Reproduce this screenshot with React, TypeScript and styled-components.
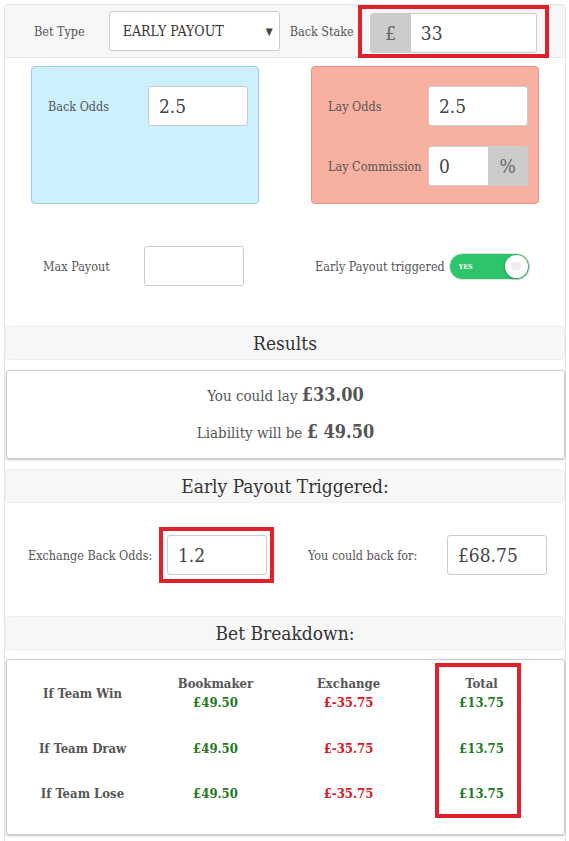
import React from "react";
import styled, { createGlobalStyle } from "styled-components";

const Global = createGlobalStyle`
  html, body { margin: 0; padding: 0; background: #fff; }
  body {
    font-family: "DejaVu Serif", "Liberation Serif", serif;
    font-stretch: condensed;
    color: #555;
  }
  * { box-sizing: border-box; }
`;

const Page = styled.div`
  margin: 4px 3px 0 4px;
  border: 1px solid #e4e4e4;
  border-radius: 4px;
  min-height: 845px;
`;

const TopBar = styled.div`
  display: flex;
  align-items: center;
  height: 53px;
  background: #f7f7f7;
  border-bottom: 1px solid #e9e9e9;
  border-radius: 4px 4px 0 0;
  padding-left: 29px;
`;

const Label = styled.span<{ $w?: number }>`
  font-size: 12.5px;
  color: #555;
  white-space: nowrap;
  ${(p) => (p.$w ? `width: ${p.$w}px; flex: none;` : "")}
`;

const Select = styled.div`
  display: flex;
  align-items: center;
  justify-content: space-between;
  width: 171px;
  height: 40px;
  margin: 0 10px 0 24px;
  padding: 0 6px 0 13px;
  background: #fff;
  border: 1px solid #ccc;
  border-radius: 3px;
  font-size: 14px;
  color: #333;
  span { font-size: 10px; color: #444; }
`;

const Highlight = styled.div<{ $pad?: string; $margin?: string }>`
  border: 4px solid #e2202b;
  padding: ${(p) => p.$pad || "4px"};
  margin: ${(p) => p.$margin || "0"};
`;

const InputGroup = styled.div<{ $w: number }>`
  display: flex;
  width: ${(p) => p.$w}px;
  height: 40px;
  border: 1px solid #ccc;
  border-radius: 3px;
  overflow: hidden;
  background: #fff;
`;

const Addon = styled.div<{ $w: number }>`
  display: flex;
  align-items: center;
  justify-content: center;
  width: ${(p) => p.$w}px;
  flex: none;
  background: #ccc;
  color: #666;
  font-size: 19px;
`;

const Field = styled.div`
  flex: 1;
  display: flex;
  align-items: center;
  padding-left: 10px;
  font-size: 19px;
  color: #444;
`;

const Input = styled.div<{ $w?: number; $h?: number }>`
  display: flex;
  align-items: center;
  width: ${(p) => p.$w || 100}px;
  height: ${(p) => p.$h || 40}px;
  padding-left: 10px;
  background: #fff;
  border: 1px solid #ccc;
  border-radius: 3px;
  font-size: 19px;
  color: #444;
  flex: none;
`;

const CardGrid = styled.div`
  display: grid;
  grid-template-columns: 228px 228px;
  column-gap: 52px;
  padding: 8px 0 0 26px;
`;

const Card = styled.div<{ $tone: "back" | "lay" }>`
  height: 138px;
  border-radius: 4px;
  border: 1px solid ${(p) => (p.$tone === "back" ? "#9ccbe6" : "#ee8f86")};
  background: ${(p) => (p.$tone === "back" ? "#cdf0fd" : "#f8b1a0")};
  padding: 19px 10px 0 16px;
  display: flex;
  flex-direction: column;
  gap: 20px;
`;

const CardRow = styled.div`
  display: grid;
  grid-template-columns: 100px 100px;
  align-items: center;
`;

const OptionsRow = styled.div`
  display: flex;
  align-items: center;
  padding: 42px 0 40px 38px;
`;

const ToggleTrack = styled.div`
  position: relative;
  display: flex;
  align-items: center;
  width: 81px;
  height: 27px;
  margin-left: 4px;
  padding-left: 9px;
  border-radius: 14px;
  background: #2dc46c;
  border: 1px solid #e2e2e2;
  color: #fff;
  font-size: 7px;
  font-weight: bold;
`;

const ToggleKnob = styled.div`
  position: absolute;
  right: 1px;
  top: 1px;
  width: 23px;
  height: 23px;
  border-radius: 50%;
  background: #fff;
  box-shadow: 0 1px 3px rgba(0, 0, 0, 0.3);
  &::after {
    content: "";
    position: absolute;
    left: 6px;
    top: 7px;
    width: 10px;
    height: 8px;
    border-radius: 3px;
    background: #eee;
  }
`;

const SectionHeader = styled.div`
  height: 34px;
  display: flex;
  align-items: center;
  justify-content: center;
  background: #f7f7f7;
  border: 1px solid #eee;
  border-radius: 4px;
  font-size: 19px;
  color: #333;
`;

const ResultBox = styled.div`
  margin: 10px 0 10px 1px;
  height: 89px;
  border: 1px solid #ccc;
  border-radius: 3px;
  box-shadow: 0 1px 2px rgba(0, 0, 0, 0.25);
  display: flex;
  flex-direction: column;
  align-items: center;
  justify-content: center;
  gap: 16px;
  padding-bottom: 3px;
  font-size: 15px;
  color: #555;
  b { font-size: 18px; color: #555; }
`;

const ExchangeRow = styled.div`
  display: flex;
  align-items: center;
  padding: 24px 0 33px 23px;
`;

const Breakdown = styled.div`
  margin: 9px 0 0 1px;
  border: 1px solid #ccc;
  border-radius: 3px;
  box-shadow: 0 1px 2px rgba(0, 0, 0, 0.25);
  display: grid;
  grid-template-columns: repeat(4, 133px);
  grid-template-rows: 38px 18px 18px;
  row-gap: 27px;
  padding: 14px 0 32px 9px;
`;

const Cell = styled.div<{ $col: number; $row: number }>`
  grid-column: ${(p) => p.$col};
  grid-row: ${(p) => p.$row};
  display: flex;
  flex-direction: column;
  align-items: center;
  justify-content: center;
  font-size: 13px;
  font-weight: bold;
  line-height: 19px;
  color: #555;
  text-align: center;
`;

const Money = styled.span<{ $neg?: boolean }>`
  color: ${(p) => (p.$neg ? "#e0141e" : "#1d7a1d")};
`;

const ColumnHighlight = styled.div`
  grid-column: 4;
  grid-row: 1 / span 3;
  justify-self: start;
  width: 86px;
  margin: -11px 0 -16px 20px;
  border: 4px solid #e2202b;
`;

const rows = [
  { label: "If Team Win", head: true },
  { label: "If Team Draw", head: false },
  { label: "If Team Lose", head: false },
];

export default function App() {
  return (
    <>
      <Global />
      <Page>
        <TopBar>
          <Label>Bet Type</Label>
          <Select>
            EARLY PAYOUT <span>▼</span>
          </Select>
          <Label>Back Stake</Label>
          <Highlight $pad="4px 8px 1px 8px" $margin="0 0 0 4px">
            <InputGroup $w={167}>
              <Addon $w={40}>£</Addon>
              <Field>33</Field>
            </InputGroup>
          </Highlight>
        </TopBar>

        <CardGrid>
          <Card $tone="back">
            <CardRow>
              <Label>Back Odds</Label>
              <Input>2.5</Input>
            </CardRow>
          </Card>
          <Card $tone="lay">
            <CardRow>
              <Label>Lay Odds</Label>
              <Input>2.5</Input>
            </CardRow>
            <CardRow>
              <Label>Lay Commission</Label>
              <InputGroup $w={100}>
                <Field>0</Field>
                <Addon $w={39}>%</Addon>
              </InputGroup>
            </CardRow>
          </Card>
        </CardGrid>

        <OptionsRow>
          <Label $w={101}>Max Payout</Label>
          <Input />
          <Label style={{ marginLeft: 71 }}>Early Payout triggered</Label>
          <ToggleTrack>
            YES
            <ToggleKnob />
          </ToggleTrack>
        </OptionsRow>

        <SectionHeader>Results</SectionHeader>
        <ResultBox>
          <div>
            You could lay <b>£33.00</b>
          </div>
          <div>
            Liability will be <b>£ 49.50</b>
          </div>
        </ResultBox>

        <SectionHeader>Early Payout Triggered:</SectionHeader>
        <ExchangeRow>
          <Label $w={131}>Exchange Back Odds:</Label>
          <Highlight $pad="4px 3px 4px 4px">
            <Input>1.2</Input>
          </Highlight>
          <Label $w={139} style={{ marginLeft: 34 }}>
            You could back for:
          </Label>
          <Input>£68.75</Input>
        </ExchangeRow>

        <SectionHeader>Bet Breakdown:</SectionHeader>
        <Breakdown>
          {rows.map((r, i) => (
            <React.Fragment key={r.label}>
              <Cell $col={1} $row={i + 1}>{r.label}</Cell>
              <Cell $col={2} $row={i + 1}>
                {r.head && <span>Bookmaker</span>}
                <Money>£49.50</Money>
              </Cell>
              <Cell $col={3} $row={i + 1}>
                {r.head && <span>Exchange</span>}
                <Money $neg>£-35.75</Money>
              </Cell>
              <Cell $col={4} $row={i + 1}>
                {r.head && <span>Total</span>}
                <Money>£13.75</Money>
              </Cell>
            </React.Fragment>
          ))}
          <ColumnHighlight />
        </Breakdown>
      </Page>
    </>
  );
}
